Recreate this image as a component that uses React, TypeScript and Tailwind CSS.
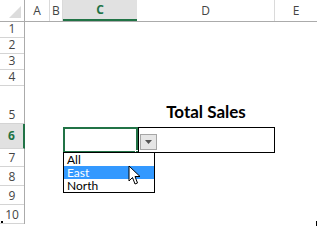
import React from 'react';

const rows = [
  { n: '1', h: 'h-[16px]' },
  { n: '2', h: 'h-[16px]' },
  { n: '3', h: 'h-[16px]' },
  { n: '4', h: 'h-[16px]' },
  { n: '5', h: 'h-[38px]' },
  { n: '6', h: 'h-[25px]' },
  { n: '7', h: 'h-[18px]' },
  { n: '8', h: 'h-[19px]' },
  { n: '9', h: 'h-[19px]' },
  { n: '10', h: 'h-[19px]' },
];

function Cursor() {
  return (
    <svg width="14" height="22" viewBox="0 0 14 22" className="absolute left-[64px] top-[12px]">
      <path
        d="M1 1 L1 16 L4.5 12.5 L7 19 L9.5 18 L7 11.5 L12 11.5 Z"
        fill="#fff"
        stroke="#000"
        strokeWidth="1"
        strokeLinejoin="round"
      />
    </svg>
  );
}

export default function App() {
  return (
    <div className="relative w-[317px] h-[226px] bg-white overflow-hidden font-['Open_Sans',sans-serif] text-[#444]">
      {/* header row */}
      <div className="flex h-[22px] border-b border-[#ababab]">
        <div className="w-[25px] flex items-end justify-end pb-[3px] pr-[3px] border-r border-[#ababab]">
          <svg width="12" height="12" viewBox="0 0 12 12">
            <polygon points="12,0 12,12 0,12" fill="#dcdcdc" />
          </svg>
        </div>
        <div className="w-[25px] flex items-center justify-center text-[12px] border-r border-[#dadada]">A</div>
        <div className="w-[13px] flex items-center justify-center text-[12px] border-r border-[#dadada]">B</div>
        <div className="w-[74px] flex items-center justify-center text-[12px] font-bold text-[#217346] bg-[#e1e1e1] border-b-2 border-[#217346]">C</div>
        <div className="w-[138px] flex items-center justify-center text-[12px] border-r border-[#dadada]">D</div>
        <div className="flex-1 flex items-center justify-center text-[12px]">E</div>
      </div>

      <div className="flex">
        {/* row headers */}
        <div className="w-[25px] flex flex-col border-r border-[#ababab]">
          {rows.map((r) =>
            r.n === '6' ? (
              <div
                key={r.n}
                className={`${r.h} flex items-end justify-center pb-[3px] bg-[#e1e1e1] text-[12px] font-bold text-[#217346] border-b border-[#d4d4d4] -mr-[1px] border-r-2 border-r-[#217346]`}
              >
                {r.n}
              </div>
            ) : (
              <div key={r.n} className={`${r.h} flex items-end justify-center text-[12px] leading-[16px] border-b border-[#d4d4d4]`}>
                {r.n}
              </div>
            )
          )}
        </div>

        {/* sheet */}
        <div className="flex-1 flex flex-col font-['Lato',sans-serif] text-black">
          <div className="h-[68px]" />
          <div className="h-[38px] flex">
            <div className="w-[112px]" />
            <div className="w-[138px] flex items-end justify-center pb-[6px] text-[17px] font-bold leading-[20px]">Total Sales</div>
          </div>
          <div className="h-[25px] flex">
            <div className="w-[38px]" />
            <div className="relative w-[75px] border-2 border-[#217346] -mt-[1px]">
              <div className="absolute right-[-4px] bottom-[-4px] w-[5px] h-[5px] bg-[#217346] border border-white" />
              <div className="absolute left-[-2px] top-[23px] z-10 w-[92px] border border-black bg-white text-[12px] leading-[13px]">
                <div className="h-[13px] pl-[3px]">All</div>
                <div className="h-[13px] pl-[3px] bg-[#3399ff] text-white">East</div>
                <div className="h-[13px] pl-[3px]">North</div>
                <Cursor />
              </div>
            </div>
            <div className="relative w-[137px] border border-black -mt-[1px]">
              <div className="absolute left-[1px] top-[6px] w-[17px] h-[16px] bg-[#e6e6e6] border border-[#a6a6a6] flex items-center justify-center">
                <svg width="7" height="4" viewBox="0 0 7 4">
                  <polygon points="0,0 7,0 3.5,4" fill="#555" />
                </svg>
              </div>
            </div>
          </div>
        </div>
      </div>

      <div className="absolute left-[1px] top-[221px] w-[2px] h-[2px] bg-black" />
      <div className="absolute right-[0px] top-[221px] w-[1px] h-[5px] bg-black" />
    </div>
  );
}
